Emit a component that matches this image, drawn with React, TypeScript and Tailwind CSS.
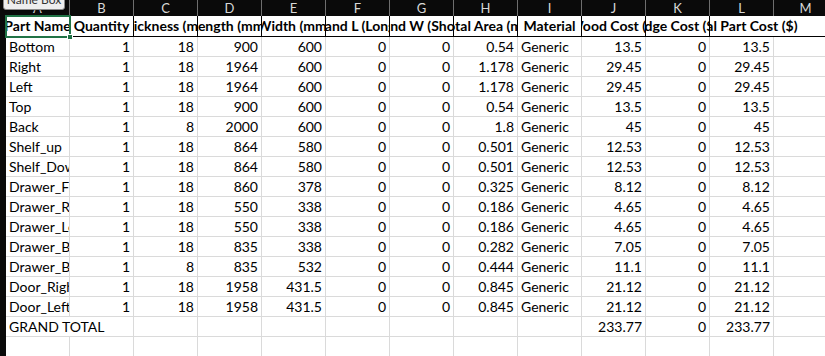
const COLS = ['A', 'B', 'C', 'D', 'E', 'F', 'G', 'H', 'I', 'J', 'K', 'L', 'M']

const HEADERS = [
  'Part Name',
  'Quantity',
  'Thickness (mm)',
  'Length (mm)',
  'Width (mm)',
  'Band L (Long)',
  'Band W (Short)',
  'Total Area (m²)',
  'Material',
  'Wood Cost ($)',
  'Edge Cost ($)',
  'Total Part Cost ($)',
]

type Row = [string, number, number, number, number, number, number, number, string, number, number, number]

const ROWS: Row[] = [
  ['Bottom', 1, 18, 900, 600, 0, 0, 0.54, 'Generic', 13.5, 0, 13.5],
  ['Right', 1, 18, 1964, 600, 0, 0, 1.178, 'Generic', 29.45, 0, 29.45],
  ['Left', 1, 18, 1964, 600, 0, 0, 1.178, 'Generic', 29.45, 0, 29.45],
  ['Top', 1, 18, 900, 600, 0, 0, 0.54, 'Generic', 13.5, 0, 13.5],
  ['Back', 1, 8, 2000, 600, 0, 0, 1.8, 'Generic', 45, 0, 45],
  ['Shelf_up', 1, 18, 864, 580, 0, 0, 0.501, 'Generic', 12.53, 0, 12.53],
  ['Shelf_Down', 1, 18, 864, 580, 0, 0, 0.501, 'Generic', 12.53, 0, 12.53],
  ['Drawer_Front', 1, 18, 860, 378, 0, 0, 0.325, 'Generic', 8.12, 0, 8.12],
  ['Drawer_Right', 1, 18, 550, 338, 0, 0, 0.186, 'Generic', 4.65, 0, 4.65],
  ['Drawer_Left', 1, 18, 550, 338, 0, 0, 0.186, 'Generic', 4.65, 0, 4.65],
  ['Drawer_Back', 1, 18, 835, 338, 0, 0, 0.282, 'Generic', 7.05, 0, 7.05],
  ['Drawer_Bottom', 1, 8, 835, 532, 0, 0, 0.444, 'Generic', 11.1, 0, 11.1],
  ['Door_Right', 1, 18, 1958, 431.5, 0, 0, 0.845, 'Generic', 21.12, 0, 21.12],
  ['Door_Left', 1, 18, 1958, 431.5, 0, 0, 0.845, 'Generic', 21.12, 0, 21.12],
]

const cell = 'h-full w-[64px] shrink-0 overflow-hidden whitespace-nowrap border-r border-b border-[#dadada] px-[3px]'

function DataRow({ row }: { row: Row }) {
  return (
    <div className="flex h-[20px]">
      {row.map((value, i) => (
        <div key={i} className={`${cell} ${typeof value === 'number' ? 'text-right' : 'text-left'}`}>{value}</div>
      ))}
      <div className={cell} />
    </div>
  )
}

export default function App() {
  return (
    <div className="relative h-[356px] w-[825px] overflow-hidden bg-white text-[14px] leading-[20px] text-black" style={{ fontFamily: 'Lato, "Liberation Sans", sans-serif' }}>
      {/* column letters */}
      <div className="flex h-[16px] bg-[#0a0a0a]">
        <div className="w-[6px] shrink-0" />
        {COLS.map((c) => (
          <div key={c} className="flex h-full w-[64px] shrink-0 items-center justify-center border-r border-[#6e6e6e] text-[13px] leading-none text-[#d8d8d8]">{c}</div>
        ))}
      </div>

      <div className="flex">
        <div className="w-[6px] shrink-0 self-stretch bg-[#0a0a0a]" />
        <div className="flex flex-col">
          {/* header row */}
          <div className="flex h-[21px] border-b border-black font-bold">
            {HEADERS.map((h, i) => (
              <div
                key={h}
                className={`flex h-full w-[64px] shrink-0 justify-center whitespace-nowrap ${i === HEADERS.length - 1 ? '[clip-path:inset(0_-80px_0_0)]' : 'overflow-hidden border-r border-black'}`}
              >
                <span>{h}</span>
              </div>
            ))}
            <div className="h-full w-[64px] shrink-0" />
          </div>

          {ROWS.map((row) => (
            <DataRow key={row[0]} row={row} />
          ))}

          {/* grand total */}
          <div className="flex h-[20px]">
            <div className="h-full w-[128px] shrink-0 whitespace-nowrap border-r border-b border-[#dadada] px-[3px]">GRAND TOTAL</div>
            {Array.from({ length: 7 }).map((_, i) => (
              <div key={i} className={cell} />
            ))}
            <div className={`${cell} text-right`}>233.77</div>
            <div className={`${cell} text-right`}>0</div>
            <div className={`${cell} text-right`}>233.77</div>
            <div className={cell} />
          </div>
          <div className="flex h-[20px]">
            {COLS.map((c) => (
              <div key={c} className={cell} />
            ))}
          </div>
        </div>
      </div>

      {/* active cell selection */}
      <div className="absolute left-[5px] top-[15px] h-[23px] w-[66px] border-2 border-[#217346]">
        <div className="absolute -bottom-[4px] -right-[4px] h-[6px] w-[6px] border border-white bg-[#217346]" />
      </div>

      {/* name box tooltip */}
      <div className="absolute -top-[14px] left-[3px] flex h-[24px] w-[62px] items-end justify-center rounded-[3px] border border-[#8a8a8a] bg-[#eeeeee] pb-[3px] text-[12px] leading-none text-[#333] shadow-[0_1px_2px_rgba(0,0,0,0.3)]">
        Name Box
      </div>
    </div>
  )
}
